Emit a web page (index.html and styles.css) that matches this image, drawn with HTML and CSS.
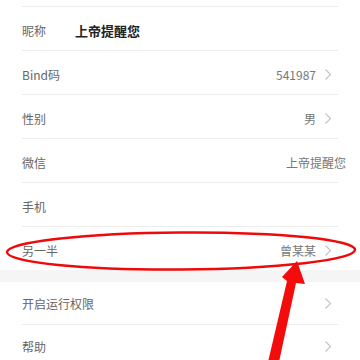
FILE: index.html
```html
<!DOCTYPE html>
<html lang="zh">
<head>
<meta charset="utf-8">
<link rel="stylesheet" href="styles.css">
</head>
<body>
<div class="page">
  <div class="list">
    <div class="row"><span class="label"></span></div>
    <div class="row"><span class="label">昵称</span><span class="nick">上帝提醒您</span></div>
    <div class="row"><span class="label">Bind码</span><span class="value">541987</span><svg class="chev" viewBox="0 0 8 13"><path d="M1.5 1.5 L6.5 6.5 L1.5 11.5"/></svg></div>
    <div class="row"><span class="label">性别</span><span class="value">男</span><svg class="chev" viewBox="0 0 8 13"><path d="M1.5 1.5 L6.5 6.5 L1.5 11.5"/></svg></div>
    <div class="row"><span class="label">微信</span><span class="value end">上帝提醒您</span></div>
    <div class="row"><span class="label">手机</span></div>
    <div class="row last"><span class="label">另一半</span><span class="value">曾某某</span><svg class="chev" viewBox="0 0 8 13"><path d="M1.5 1.5 L6.5 6.5 L1.5 11.5"/></svg></div>
  </div>
  <div class="gap"></div>
  <div class="list lower">
    <div class="row"><span class="label">开启运行权限</span><svg class="chev" viewBox="0 0 8 13"><path d="M1.5 1.5 L6.5 6.5 L1.5 11.5"/></svg></div>
    <div class="row"><span class="label">帮助</span><svg class="chev" viewBox="0 0 8 13"><path d="M1.5 1.5 L6.5 6.5 L1.5 11.5"/></svg></div>
  </div>
  <svg class="annot" viewBox="0 0 360 360" width="360" height="360">
    <ellipse cx="181" cy="251" rx="174" ry="18.5" fill="none" stroke="#ee0a0a" stroke-width="2.4" transform="rotate(-0.4 181 251)"/>
    <polygon points="297,261 305,284 296,283 279,362 268,362 287,281 282,277" fill="#f20c0c"/>
  </svg>
</div>
</body>
</html>
```
FILE: styles.css
```css
html, body {
  margin: 0;
  padding: 0;
  background: #fff;
}
body {
  font-family: "Noto Sans CJK SC", "Noto Sans", sans-serif;
  width: 360px;
  height: 360px;
  overflow: hidden;
}
.page {
  position: relative;
  width: 360px;
  height: 360px;
  overflow: hidden;
}
.list {
  background: #fff;
  padding-left: 22px;
  padding-right: 22px;
}
.list:first-child {
  margin-top: -37px;
}
.row {
  height: 44px;
  box-sizing: border-box;
  padding-top: 3px;
  border-bottom: 1px solid #ececec;
  display: flex;
  align-items: center;
}
.row.last {
  border-bottom: none;
  height: 43px;
}
.lower .row {
  height: 43px;
  padding-top: 0;
}
.label {
  font-size: 12px;
  color: #666;
  flex: none;
}
.nick {
  margin-left: 29px;
  font-size: 13px;
  font-weight: 700;
  color: #222;
}
.value {
  margin-left: auto;
  font-size: 12px;
  color: #777;
}
.value.end {
  margin-right: -8px;
}
.chev {
  width: 8px;
  height: 13px;
  margin-left: 8px;
  margin-right: 6px;
  flex: none;
}
.row .label + .chev {
  margin-left: auto;
}
.chev path {
  fill: none;
  stroke: #c4c4c4;
  stroke-width: 1.2;
}
.gap {
  height: 12px;
  background: #f5f5f5;
}
.annot {
  position: absolute;
  left: 0;
  top: 0;
  pointer-events: none;
}
```
